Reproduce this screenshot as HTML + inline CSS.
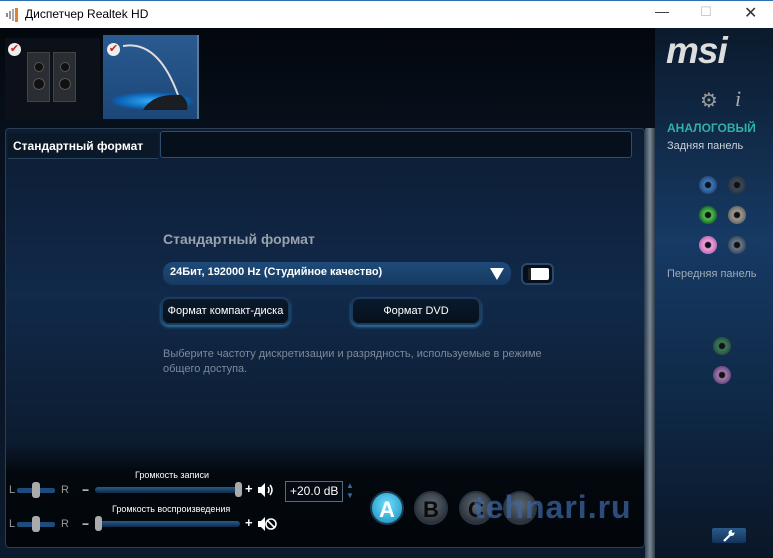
<!DOCTYPE html>
<html><head><meta charset="utf-8"><style>
*{margin:0;padding:0;box-sizing:border-box}
body{width:773px;height:558px;overflow:hidden;background:#050a12;font-family:"Liberation Sans","DejaVu Sans",sans-serif;position:relative}
.a{position:absolute}
.tb{left:0;top:0;width:773px;height:28px;background:#fff;border-top:1px solid #2a6fb0}
.tb span{position:absolute;left:25px;top:6px;font-size:12px;color:#000}
.main{left:0;top:28px;width:773px;height:530px;background:linear-gradient(180deg,#03070d 0%,#07101c 20%,#0b1a2d 100%)}
.panel{left:5px;top:128px;width:640px;height:420px;border:1px solid #2c3e52;border-radius:4px;background:linear-gradient(180deg,#0c1d33 0%,#11294a 40%,#0c1c30 75%,#03080e 82%,#02060b 100%)}
.right{left:655px;top:28px;width:118px;height:530px;background:linear-gradient(180deg,#0b1a2c 0%,#163a64 40%,#0f2947 70%,#0a1626 100%)}
.sep{left:645px;top:128px;width:10px;height:430px;background:linear-gradient(90deg,#3a4654,#7a8796,#2f3a46)}
.btn{border-radius:8px;background:linear-gradient(#0a1a2c,#06101c);border:2px solid #1c3a5a;box-shadow:0 2px 3px #2c7ab0;color:#fff;font-size:11px;text-align:center;line-height:24px}
.jack{width:18px;height:18px;border-radius:50%}
.circ{width:34px;height:34px;border-radius:50%;color:#0c0c0c;font-size:22px;font-weight:bold;text-align:center;line-height:34px;background:radial-gradient(circle at 50% 40%,#606a74,#1a2028);border:2px solid #2a3540}
</style></head><body>
<div class="a tb"><svg class="a" style="left:6px;top:7px" width="16" height="14"><rect x="0" y="5" width="2" height="4" fill="#888"/><rect x="3" y="3" width="2" height="8" fill="#999"/><rect x="6" y="1" width="2" height="12" fill="#aaa"/><rect x="9" y="0" width="3" height="14" fill="#e08030"/></svg><span>Диспетчер Realtek HD</span>
<span style="left:655px;top:2px;font-size:14px;color:#333">—</span><span style="left:700px;top:3px;font-size:13px;color:#bbb">☐</span><span style="left:744px;top:2px;font-size:16px;color:#333">✕</span></div>
<div class="a main"></div>
<div class="a" style="left:5px;top:38px;width:95px;height:82px;background:#0c1119"></div>
<div class="a" style="left:27px;top:52px;width:23px;height:50px;background:#2a2d31;border:1px solid #444"></div>
<div class="a" style="left:53px;top:52px;width:23px;height:50px;background:#2a2d31;border:1px solid #444"></div>
<div class="a" style="left:34px;top:62px;width:10px;height:10px;border-radius:50%;background:#111;border:1px solid #555"></div>
<div class="a" style="left:33px;top:78px;width:12px;height:12px;border-radius:50%;background:#111;border:1px solid #555"></div>
<div class="a" style="left:60px;top:62px;width:10px;height:10px;border-radius:50%;background:#111;border:1px solid #555"></div>
<div class="a" style="left:59px;top:78px;width:12px;height:12px;border-radius:50%;background:#111;border:1px solid #555"></div>
<div class="a" style="left:8px;top:43px;width:13px;height:13px;border-radius:50%;background:#eee;color:#d02020;font-size:11px;line-height:13px;text-align:center">✔</div>
<div class="a" style="left:103px;top:35px;width:96px;height:84px;background:linear-gradient(#2a5a90,#1c4778);border-right:2px solid #5a7a9a"></div>
<div class="a" style="left:110px;top:92px;width:85px;height:18px;border-radius:50%;background:radial-gradient(#2fb0ff,#0d5fb0 60%,transparent 72%)"></div>
<svg class="a" style="left:103px;top:35px" width="96" height="84"><path d="M20 11 Q55 5 75 60" stroke="#ddd" stroke-width="2" fill="none"/><path d="M40 75 Q50 58 78 60 Q86 66 84 75Z" fill="#1a1d22"/></svg>
<div class="a" style="left:107px;top:43px;width:13px;height:13px;border-radius:50%;background:#eee;color:#d02020;font-size:11px;line-height:13px;text-align:center">✔</div>
<div class="a right"></div>
<div class="a panel"></div>
<div class="a sep"></div>
<div class="a" style="left:8px;top:133px;width:150px;height:26px;background:#0b1828;border-bottom:1px solid #2a4560"></div>
<div class="a" style="left:13px;top:139px;color:#fff;font-size:12px;font-weight:bold">Стандартный формат</div>
<div class="a" style="left:160px;top:131px;width:472px;height:27px;border:1px solid #2d4e6e;border-radius:3px;background:#05101c"></div>
<div class="a" style="left:163px;top:231px;color:#9aa3ad;font-size:14px;font-weight:bold">Стандартный формат</div>
<div class="a" style="left:163px;top:262px;width:348px;height:23px;border-radius:10px;background:linear-gradient(#1f4a78,#163a62)"></div>
<div class="a" style="left:170px;top:266px;color:#fff;font-size:11px;font-weight:bold">24Бит, 192000 Hz (Студийное качество)</div>
<div class="a" style="left:490px;top:268px;width:0;height:0;border-left:7px solid transparent;border-right:7px solid transparent;border-top:12px solid #fff"></div>
<div class="a" style="left:521px;top:263px;width:33px;height:22px;border-radius:6px;background:#06101c;border:2px solid #2a4a6a"></div>
<div class="a" style="left:528px;top:268px;width:21px;height:12px;background:#fff;border-left:3px solid #222;border-radius:2px"></div>
<div class="a btn" style="left:161px;top:297px;width:129px;height:28px">Формат компакт-диска</div>
<div class="a btn" style="left:351px;top:297px;width:130px;height:28px">Формат DVD</div>
<div class="a" style="left:163px;top:347px;color:#7d8a99;font-size:11px;line-height:15px">Выберите частоту дискретизации и разрядность, используемые в режиме<br>общего доступа.</div>
<div class="a" style="left:135px;top:470px;color:#fff;font-size:9px">Громкость записи</div>
<div class="a" style="left:112px;top:504px;color:#fff;font-size:9px">Громкость воспроизведения</div>
<div class="a" style="left:9px;top:484px;color:#999;font-size:11px">L</div><div class="a" style="left:61px;top:484px;color:#999;font-size:11px">R</div>
<div class="a" style="left:9px;top:518px;color:#999;font-size:11px">L</div><div class="a" style="left:61px;top:518px;color:#999;font-size:11px">R</div>
<div class="a" style="left:17px;top:488px;width:38px;height:5px;background:#1d4c7c;border-radius:2px"></div>
<div class="a" style="left:17px;top:522px;width:38px;height:5px;background:#1d4c7c;border-radius:2px"></div>
<div class="a" style="left:32px;top:482px;width:8px;height:16px;background:#aaa;border-radius:3px"></div>
<div class="a" style="left:32px;top:516px;width:8px;height:16px;background:#aaa;border-radius:3px"></div>
<div class="a" style="left:82px;top:483px;color:#ddd;font-size:12px;font-weight:bold">−</div>
<div class="a" style="left:82px;top:517px;color:#ddd;font-size:12px;font-weight:bold">−</div>
<div class="a" style="left:95px;top:487px;width:145px;height:6px;background:linear-gradient(#2a5a8a,#0e2a48);border-radius:3px"></div>
<div class="a" style="left:95px;top:521px;width:145px;height:6px;background:linear-gradient(#2a5a8a,#0e2a48);border-radius:3px"></div>
<div class="a" style="left:235px;top:482px;width:7px;height:15px;background:#aaa;border-radius:3px"></div>
<div class="a" style="left:95px;top:516px;width:7px;height:15px;background:#aaa;border-radius:3px"></div>
<div class="a" style="left:245px;top:481px;color:#fff;font-size:13px;font-weight:bold">+</div>
<div class="a" style="left:245px;top:515px;color:#fff;font-size:13px;font-weight:bold">+</div>
<svg class="a" style="left:257px;top:482px" width="20" height="16"><path d="M1 5h3l4-4v14l-4-4H1z" fill="#fff"/><path d="M11 5q2 3 0 6M13 3q4 5 0 10" stroke="#fff" stroke-width="1.5" fill="none"/></svg>
<svg class="a" style="left:257px;top:516px" width="20" height="16"><path d="M1 5h3l4-4v14l-4-4H1z" fill="#fff"/><circle cx="14" cy="8" r="5" stroke="#fff" stroke-width="1.6" fill="none"/><path d="M10.5 4.5l7 7" stroke="#fff" stroke-width="1.6"/></svg>
<div class="a" style="left:285px;top:481px;width:58px;height:21px;border:1px solid #5a6a7a;background:#050a12;color:#fff;font-size:12px;line-height:19px;padding-left:4px">+20.0 dB</div>
<div class="a" style="left:346px;top:481px;color:#3a6a9a;font-size:8px;line-height:10px">▲<br>▼</div>
<div class="a circ" style="left:370px;top:491px;background:radial-gradient(circle at 50% 40%,#6fe0ff,#138ab8);color:#fff;border-color:#1c3a50">A</div>
<div class="a circ" style="left:414px;top:491px">B</div>
<div class="a circ" style="left:459px;top:491px">C</div>
<div class="a circ" style="left:503px;top:491px"></div>
<div class="a" style="left:474px;top:489px;color:rgba(60,100,160,.75);font-size:32px;font-weight:bold;letter-spacing:1px">tehnari.ru</div>
<div class="a" style="left:712px;top:528px;width:34px;height:15px;background:linear-gradient(#2a5a8a,#12335a);border-radius:2px"></div>
<svg class="a" style="left:722px;top:529px" width="14" height="13"><path d="M2 12l6-6" stroke="#fff" stroke-width="2.2"/><circle cx="9.5" cy="4" r="3" fill="#fff"/><circle cx="11" cy="2.5" r="1.3" fill="#1d4670"/></svg>
<div class="a" style="left:666px;top:30px;color:#ddd;font-size:37px;font-weight:bold;font-style:italic;letter-spacing:-1px">msi</div>
<div class="a" style="left:700px;top:88px;color:#999;font-size:20px">⚙</div>
<div class="a" style="left:735px;top:86px;color:#aaa;font-size:22px;font-style:italic;font-family:'Liberation Serif',serif">i</div>
<div class="a" style="left:667px;top:121px;color:#2fb0a8;font-size:12px;font-weight:bold">АНАЛОГОВЫЙ</div>
<div class="a" style="left:667px;top:140px;color:#c8d0da;font-size:11px">Задняя панель</div>
<div class="a" style="left:667px;top:268px;color:#a0aab6;font-size:11px">Передняя панель</div>
<div class="a jack" style="left:699px;top:176px;background:radial-gradient(#111 20%,#3a78c0 30%,#2a4a78 70%)"></div>
<div class="a jack" style="left:728px;top:176px;background:radial-gradient(#111 20%,#3a4a5a 30%,#2a3540 70%)"></div>
<div class="a jack" style="left:699px;top:206px;background:radial-gradient(#111 20%,#50c050 30%,#1e6a28 70%)"></div>
<div class="a jack" style="left:728px;top:206px;background:radial-gradient(#111 20%,#a09a90 30%,#6a6a6a 70%)"></div>
<div class="a jack" style="left:699px;top:236px;background:radial-gradient(#111 20%,#f0a0e0 30%,#c070b0 70%)"></div>
<div class="a jack" style="left:728px;top:236px;background:radial-gradient(#111 20%,#6a7a8a 30%,#3a4a5a 70%)"></div>
<div class="a jack" style="left:713px;top:337px;background:radial-gradient(#111 20%,#3a7a5a 30%,#2a5040 70%)"></div>
<div class="a jack" style="left:713px;top:366px;background:radial-gradient(#111 20%,#a07ab0 30%,#6a4a80 70%)"></div>
</body></html>
